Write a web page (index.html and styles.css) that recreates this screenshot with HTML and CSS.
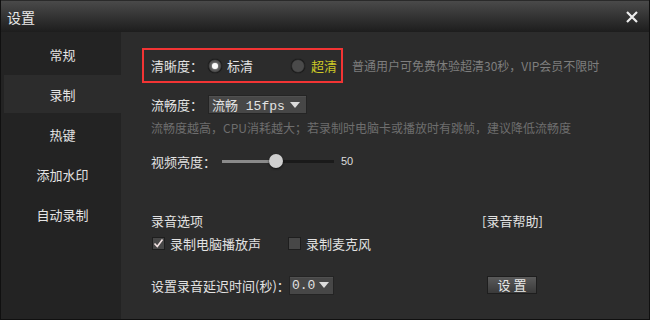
FILE: index.html
```html
<!DOCTYPE html>
<html lang="zh-CN">
<head>
<meta charset="utf-8">
<title>设置</title>
<link rel="stylesheet" href="styles.css">
</head>
<body>
<div class="window">
  <div class="titlebar">
    <span class="title">设置</span>
    <svg class="close" width="14" height="14" viewBox="0 0 14 14"><path d="M2 2 L12 12 M12 2 L2 12" stroke="#ececec" stroke-width="2.2" fill="none"/></svg>
  </div>
  <div class="body">
    <nav class="sidebar">
      <div class="nav-item">常规</div>
      <div class="nav-item active">录制</div>
      <div class="nav-item">热键</div>
      <div class="nav-item">添加水印</div>
      <div class="nav-item">自动录制</div>
    </nav>
    <main class="main">
      <div class="row-quality">
        <div class="redbox">
          <span class="label">清晰度：</span>
          <span class="radio checked"></span><span class="radio-text">标清</span>
          <span class="radio second"></span><span class="radio-text vip">超清</span>
        </div>
        <span class="hint">普通用户可免费体验超清30秒，VIP会员不限时</span>
      </div>
      <div class="row row-fps">
        <span class="label">流畅度：</span>
        <div class="select select-fps"><span class="mono">流畅 15fps</span><span class="arrow"></span></div>
      </div>
      <div class="row hint2">流畅度越高，CPU消耗越大；若录制时电脑卡或播放时有跳帧，建议降低流畅度</div>
      <div class="row row-bright">
        <span class="label-b">视频亮度：</span>
        <div class="track"><div class="fill"></div><div class="knob"></div></div>
        <span class="value">50</span>
      </div>
      <div class="row row-audio">
        <span class="audio-title">录音选项</span>
        <span class="help">[录音帮助]</span>
      </div>
      <div class="row row-checks">
        <span class="check on"><svg width="13" height="13" viewBox="0 0 13 13"><path d="M2.5 6.5 L5.3 9.5 L10.5 2.5" stroke="#f2e2e2" stroke-width="1.6" fill="none"/></svg></span>
        <span class="check-text first">录制电脑播放声</span>
        <span class="check"></span>
        <span class="check-text">录制麦克风</span>
      </div>
      <div class="row row-delay">
        <span class="label-d">设置录音延迟时间(秒)：</span>
        <div class="select select-delay"><span class="mono">0.0</span><span class="arrow"></span></div>
        <button class="btn">设 置</button>
      </div>
    </main>
  </div>
</div>
</body>
</html>
```
FILE: styles.css
```css
* { box-sizing: border-box; }
html, body { margin: 0; padding: 0; background: #2c2c2c; }
body {
  font-family: "Noto Sans CJK SC", "DejaVu Sans", sans-serif;
  font-size: 13px;
  color: #e2e2e2;
  white-space: nowrap;
}
.window {
  width: 650px;
  height: 320px;
  border: 1px solid #101010;
  border-top: none;
  display: flex;
  flex-direction: column;
  overflow: hidden;
}
.titlebar {
  height: 32px;
  flex: none;
  background: linear-gradient(#4a4a4a, #1d1d1d);
  border-top: 1px solid #2a2a2a;
  display: flex;
  align-items: center;
  justify-content: space-between;
  padding: 0 10px 0 6px;
}
.title { font-size: 14px; color: #e8e8e8; line-height: 1; margin-top: 1px; }
.close { display: block; }
.body { flex: 1; display: flex; }
.sidebar {
  width: 120px;
  background: #232323;
  padding-top: 3px;
  display: flex;
  flex-direction: column;
  gap: 2px;
}
.nav-item {
  height: 38px;
  margin-left: 3px;
  display: flex;
  align-items: center;
  justify-content: center;
  font-size: 13px;
  color: #e4e4e4;
}
.nav-item.active { background: #2c2c2c; }
.main {
  flex: 1;
  background: #2c2c2c;
  padding: 16px 0 0 21px;
  display: flex;
  flex-direction: column;
}
.row { display: flex; align-items: center; padding-left: 9px; }
.row-quality { display: flex; align-items: center; height: 35px; }
.redbox {
  width: 201px;
  height: 35px;
  border: 2px solid #f23434;
  display: flex;
  align-items: center;
  padding-left: 7px;
}
.label { width: 57px; flex: none; }
.radio {
  width: 14px;
  height: 14px;
  border-radius: 50%;
  background: #525252;
  border: 1px solid #262626;
  box-shadow: 0 0 1px #000;
  position: relative;
  flex: none;
}
.radio.second { background: #4a4a4a; margin-left: 38px; }
.radio.checked::after {
  content: "";
  position: absolute;
  left: 3px; top: 3px;
  width: 6px; height: 6px;
  border-radius: 50%;
  background: #fafafa;
  box-shadow: 0 0 2px #ddd;
}
.radio-text { margin-left: 5px; }
.radio-text.vip { color: #cdc927; margin-left: 6px; }
.hint { font-size: 12px; color: #7e7e7e; margin-left: 9px; }
.row-fps { margin-top: 12px; height: 19px; }
.select {
  flex: none;
  height: 19px;
  background-color: #474747;
  border: 1px solid #242424;
  box-shadow: inset 0 1px 0 #505050;
  display: flex;
  align-items: center;
  justify-content: space-between;
  padding: 0 6px 0 3px;
  color: #e2e2e2;
}
.select-fps { width: 99px; }
.mono { font-family: "Liberation Mono", "Noto Sans CJK SC", monospace; font-size: 13px; }
.arrow {
  width: 0; height: 0;
  border-left: 5px solid transparent;
  border-right: 5px solid transparent;
  border-top: 6px solid #dcdcdc;
}
.hint2 { margin-top: 5px; font-size: 12px; color: #6e6e6e; height: 16px; }
.row-bright { margin-top: 16px; height: 20px; }
.label-b { width: 71px; flex: none; }
.track {
  width: 112px;
  height: 3px;
  background: #1a1a1a;
  position: relative;
}
.fill { width: 54px; height: 3px; background: #8a8a8a; }
.knob {
  position: absolute;
  left: 47px; top: -6px;
  width: 14px; height: 14px;
  border-radius: 50%;
  background: #cfcfcf;
  box-shadow: 0 1px 2px #111;
}
.value { margin-left: 7px; font-family: "Liberation Sans", sans-serif; font-size: 11px; color: #dcdcdc; }
.row-audio { margin-top: 40px; height: 18px; }
.audio-title { width: 331px; flex: none; }
.row-checks { margin-top: 5px; height: 18px; padding-left: 10px; }
.check {
  width: 13px; height: 13px;
  background: #474747;
  border: 1px solid #1e1e1e;
  display: flex;
  flex: none;
}
.check svg { display: block; margin: -1px; }
.check-text { margin-left: 5px; }
.check-text.first { width: 118px; flex: none; }
.row-delay { margin-top: 23px; height: 20px; }
.label-d { width: 138px; flex: none; }
.select-delay { width: 45px; padding-left: 2px; padding-right: 4px; }
.btn {
  margin-left: 153px;
  width: 50px;
  height: 18px;
  padding: 0;
  font-family: inherit;
  font-size: 13px;
  color: #e8e8e8;
  background: linear-gradient(#5a5a5a, #3a3a3a);
  border: 1px solid #1e1e1e;
  line-height: 16px;
}
```
